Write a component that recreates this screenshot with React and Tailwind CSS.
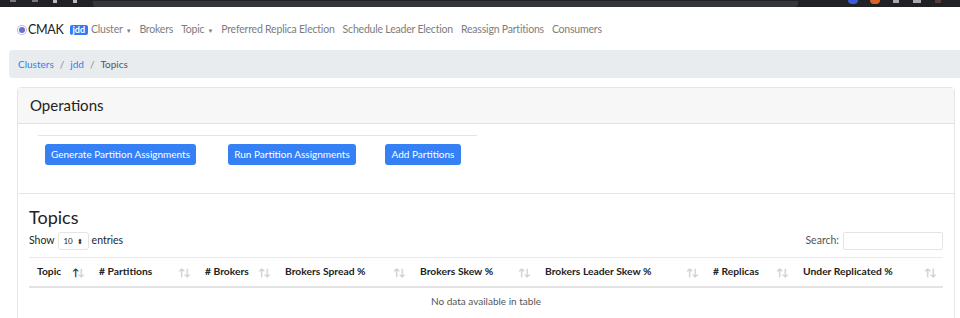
import React from "react";

const font = { fontFamily: "Lato, 'Liberation Sans', sans-serif" };

function SortIcon({ active }) {
  return (
    <span className="text-[10px] tracking-[-2px] leading-none">
      <span className={active ? "text-[#333]" : "text-[#ccc]"}>↑</span>
      <span className="text-[#ccc]">↓</span>
    </span>
  );
}

const cols = [
  ["Topic", "w-[62px]", true],
  ["# Partitions", "w-[106px]"],
  ["# Brokers", "w-[80px]"],
  ["Brokers Spread %", "w-[135px]"],
  ["Brokers Skew %", "w-[125px]"],
  ["Brokers Leader Skew %", "w-[168px]"],
  ["# Replicas", "w-[90px]"],
  ["Under Replicated %", "w-[148px]"],
];

export default function App() {
  return (
    <div className="w-[960px] h-[318px] overflow-hidden bg-white text-[#212529]" style={font}>
      {/* browser chrome remnant */}
      <div className="h-[7px] bg-[#202124] flex items-end relative">
        <div className="absolute left-[10px] top-0 w-[6px] h-[2px] bg-[#777]" />
        <div className="absolute left-[32px] top-0 w-[6px] h-[2px] bg-[#777]" />
        <div className="absolute left-[53px] top-0 w-[4px] h-[3px] bg-[#bbb]" />
        <div className="absolute left-[73px] top-0 w-[4px] h-[3px] bg-[#bbb]" />
        <div className="ml-[93px] w-[705px] h-[6px] bg-[#35363a] rounded-b-[3px]" />
        <div className="absolute left-[848px] top-0 w-[10px] h-[4px] bg-[#3b5bd6] rounded-b-sm" />
        <div className="absolute left-[870px] top-0 w-[10px] h-[4px] bg-[#d9622b] rounded-b-sm" />
        <div className="absolute left-[893px] top-0 w-[6px] h-[3px] bg-[#aaa]" />
        <div className="absolute left-[913px] top-0 w-[8px] h-[3px] bg-[#aaa]" />
        <div className="absolute left-[935px] top-0 w-[6px] h-[3px] bg-[#5a3a3a]" />
      </div>

      {/* navbar */}
      <nav className="h-[43px] pt-[3px] flex items-center pl-[19px] text-[10.5px] tracking-[-0.2px]">
        <a className="flex items-center text-[12.5px] tracking-[-0.3px] text-[#222] mr-[6px]">
          <span className="w-[6px] h-[6px] rounded-full bg-[#6b6fc7] ring-1 ring-[#b9bbe6] ring-offset-1 mr-[3px]" />
          CMAK
        </a>
        <span className="bg-[#2f7cf6] text-white text-[9px] tracking-normal font-bold px-[3px] rounded-[2px] leading-[10px] mr-[3px]">jdd</span>
        <div className="flex items-center gap-[8px] text-[#7d7d7d]">
          <span className="flex items-center">Cluster<span className="ml-[3px] text-[6px]">▼</span></span>
          <span>Brokers</span>
          <span className="flex items-center">Topic<span className="ml-[3px] text-[6px]">▼</span></span>
          <span>Preferred Replica Election</span>
          <span>Schedule Leader Election</span>
          <span>Reassign Partitions</span>
          <span>Consumers</span>
        </div>
      </nav>

      {/* breadcrumb */}
      <div className="ml-[9px] h-[28px] bg-[#e9ecef] rounded-l-[4px] flex items-center pl-[9px] pt-[1px] text-[10px]">
        <span className="text-[#2f7cf6]">Clusters</span>
        <span className="text-[#888] px-[6px]">/</span>
        <span className="text-[#2f7cf6]">jdd</span>
        <span className="text-[#888] px-[6px]">/</span>
        <span className="text-[#555]">Topics</span>
      </div>

      {/* card */}
      <div className="mt-[9px] ml-[17px] w-[938px] h-[260px] border border-[#e6e6e6] rounded-t-[4px]">
        <div className="h-[36px] bg-[#f7f7f7] border-b border-[#e3e3e3] flex items-center pl-[12px] text-[15px] text-[#222]">
          Operations
        </div>
        <div className="h-[70px] border-b border-[#e6e6e6] pt-[11px]">
          <div className="ml-[20px] w-[439px] border-t border-[#e4e4e4]" />
          <div className="flex mt-[8px] ml-[27px] text-[10px] text-white whitespace-nowrap">
            <button className="h-[21px] w-[151px] bg-[#3580f5] rounded-[3px]">Generate Partition Assignments</button>
            <button className="ml-[32px] h-[21px] w-[128px] bg-[#3580f5] rounded-[3px]">Run Partition Assignments</button>
            <button className="ml-[29px] h-[21px] w-[76px] bg-[#3580f5] rounded-[3px]">Add Partitions</button>
          </div>
        </div>
        <div className="px-[11px] pt-[11px]">
          <div className="text-[18px] leading-[24px] text-[#222]">Topics</div>
          <div className="flex items-center justify-between mt-[2px] text-[10.5px] h-[20px]">
            <div className="flex items-center">
              Show
              <span className="mx-[3px] w-[31px] h-[18px] border border-[#e4e4e4] rounded-[3px] text-[8px] flex items-center justify-center gap-[4px]">
                10 <span className="text-[7px]">⬍</span>
              </span>
              entries
            </div>
            <div className="flex items-center text-[#555]">
              Search:
              <span className="ml-[4px] w-[100px] h-[18px] border border-[#e4e4e4] rounded-[2px]" />
            </div>
          </div>
          <table className="mt-[6px] w-[914px] table-fixed border-collapse text-[10.3px]">
            <thead>
              <tr className="h-[29px] border-t border-[#e9e9e9] border-b-2 border-b-[#e3e3e3]">
                {cols.map(([label, w, active]) => (
                  <th key={label} className={`${w} px-[8px] text-left font-bold text-[#222]`}>
                    <div className="flex items-center justify-between">
                      <span>{label}</span>
                      <SortIcon active={active} />
                    </div>
                  </th>
                ))}
              </tr>
            </thead>
            <tbody>
              <tr>
                <td colSpan={8} className="text-center text-[10px] text-[#555] h-[28px]">No data available in table</td>
              </tr>
            </tbody>
          </table>
        </div>
      </div>
    </div>
  );
}
